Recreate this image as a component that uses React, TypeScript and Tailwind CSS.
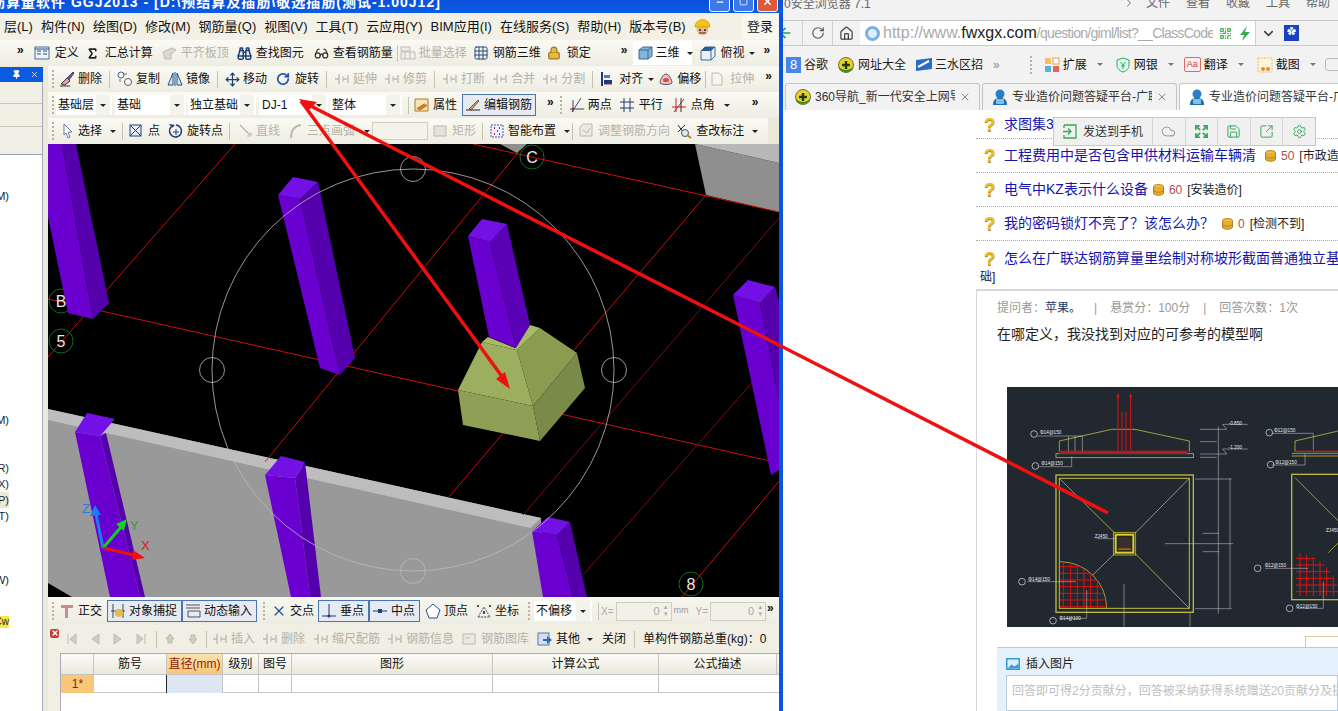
import React from 'react'
import {
  ArrowLeft, Binoculars, ChevronDown, ChevronRight, Cloud, Expand, Glasses, Grid3x3, House, Lock,
  Minus, Move, Pin, QrCode, RotateCw, Save, Settings, Sigma, Square, SquareArrowOutUpRight, X
} from 'lucide-react'

const FONT = "[font-family:'Liberation_Sans','Noto_Sans_CJK_SC',sans-serif]"

// small 16x16 drawing wrapper for the toolbar glyphs lucide has no match for
const G = ({ children, w = 16, className = '' }: { children: React.ReactNode; w?: number; className?: string }) => (
  <svg width={w} height={16} viewBox={`0 0 ${w} 16`} fill="none" className={`shrink-0 ${className}`}>
    {children}
  </svg>
)

const Caret = ({ className = '' }: { className?: string }) => (
  <span className={`inline-block h-0 w-0 border-x-[3px] border-t-[3px] border-x-transparent border-t-[#222] ${className}`} />
)

const More = ({ className = '' }: { className?: string }) => (
  <span className={`text-[12px] leading-none font-bold text-[#111] ${className}`}>»</span>
)

const Grip = ({ className = '' }: { className?: string }) => (
  <span className={`h-[18px] w-[2px] shrink-0 border-l-2 border-dotted border-[#b5b3a4] ${className}`} />
)

const Sep = ({ className = '' }: { className?: string }) => <span className={`h-[17px] w-px shrink-0 bg-[#c5c2b0] ${className}`} />

interface ToolProps {
  icon?: React.ReactNode
  label: string
  dim?: boolean
  caret?: boolean
  on?: boolean
  className?: string
}

const Tool = ({ icon, label, dim, caret, on, className = '' }: ToolProps) => (
  <span
    className={`flex h-[22px] shrink-0 items-center gap-[3px] whitespace-nowrap text-[12px] ${dim ? 'text-[#b4b2a8]' : 'text-[#111]'} ${
      on ? 'border border-[#4a76b0] bg-[#e6eaf2] px-[2px]' : ''
    } ${className}`}
  >
    {icon}
    {label}
    {caret && <Caret className="ml-[4px]" />}
  </span>
)

const Combo = ({ label, className = '' }: { label: string; className?: string }) => (
  <span className={`flex h-[20px] shrink-0 items-center justify-between whitespace-nowrap bg-white pl-[2px] pr-[2px] text-[12px] text-[#111] ${className}`}>
    {label}
    <span className="flex h-full w-[14px] items-center justify-center bg-[#f4f3ea]">
      <Caret />
    </span>
  </span>
)

const Bar = ({ children, className = '' }: { children: React.ReactNode; className?: string }) => (
  <div className={`flex h-[26px] shrink-0 items-center bg-[linear-gradient(#faf9f3,#eeede2)] ${className}`}>{children}</div>
)

const WinBtn = ({ children, className = '' }: { children: React.ReactNode; className?: string }) => (
  <span className={`flex h-[20px] w-[21px] items-center justify-center rounded-[3px] border border-white text-white ${className}`}>{children}</span>
)

const gray = '#bdbbb0'
const Stub = ({ c = gray }: { c?: string }) => (
  <G>
    <path d="M1 8h4M9 8h4M5 3v10M14 4v8" stroke={c} strokeWidth="1.4" />
    <path d="M9 5v6" stroke={c} />
  </G>
)

const Menu = () => (
  <div className="flex h-[27px] shrink-0 items-center gap-[8px] bg-[#f3f1e5] pl-[4px] text-[13px] text-[#111]">
    {['层(L)', '构件(N)', '绘图(D)', '修改(M)', '钢筋量(Q)', '视图(V)', '工具(T)', '云应用(Y)', 'BIM应用(I)', '在线服务(S)', '帮助(H)', '版本号(B)'].map((m) => (
      <span key={m} className="whitespace-nowrap">
        {m}
      </span>
    ))}
    <svg width="17" height="18" viewBox="0 0 17 18" className="shrink-0">
      <circle cx="8.5" cy="11" r="6" fill="#e9b98f" />
      <path d="M1 9a7.5 7.5 0 0 1 15 0z" fill="#f2c413" stroke="#b88a00" strokeWidth=".6" />
      <circle cx="6" cy="12" r="1" fill="#222" />
      <circle cx="11" cy="12" r="1" fill="#222" />
      <path d="M5 15h7" stroke="#522" />
    </svg>
    <span className="ml-auto mr-[1px] flex h-[24px] w-[36px] items-center justify-center whitespace-nowrap bg-[#f8f7f0]">登录</span>
  </div>
)

const TopBar = () => (
  <Bar className="gap-[8px] pl-[17px]">
    <More className="mr-[2px] -mt-[6px]" />
    <Tool
      label="定义"
      icon={
        <G>
          <rect x="1" y="2" width="14" height="12" fill="#eef3fa" stroke="#4d6d96" />
          <path d="M3 6h4M3 9h4M9 6h4M9 9h4M1 4h14" stroke="#2d4d78" />
        </G>
      }
      className="gap-[5px]"
    />
    <Tool icon={<Sigma size={13} strokeWidth={3} className="text-[#222]" />} label="汇总计算" className="-ml-[1px] gap-[6px]" />
    <Tool
      dim
      label="平齐板顶"
      icon={
        <G>
          <path d="M1 7l9-4 4 2-5 4v5H3z" fill="#dcdad0" stroke={gray} />
        </G>
      }
      className="ml-[1px]"
    />
    <Tool icon={<Binoculars size={15} strokeWidth={2.4} className="text-[#1b3f7a]" />} label="查找图元" className="gap-[4px]" />
    <Tool icon={<Glasses size={15} strokeWidth={2} className="text-[#333]" />} label="查看钢筋量" className="ml-[2px] gap-[4px]" />
    <Sep className="-ml-[4px] -mr-[6px]" />
    <Tool
      dim
      label="批量选择"
      icon={
        <G>
          <path d="M1 2h9v4H1zM1 7h14v7H1zM5 7v7M10 7v7" stroke={gray} fill="#eee" />
        </G>
      }
    />
    <Tool icon={<Grid3x3 size={16} strokeWidth={1.4} className="text-[#1f3f78]" />} label="钢筋三维" className="-ml-[2px] gap-[4px]" />
    <Tool icon={<Lock size={14} strokeWidth={2} fill="#e7b93c" className="text-[#9a7a25]" />} label="锁定" className="-ml-[2px] gap-[6px]" />
    <More className="ml-[22px] -mt-[6px]" />
    <span className="-ml-[3px] flex h-[24px] w-[59px] items-center gap-[2px] whitespace-nowrap bg-white pl-[5px]">
      <G>
        <path d="M1 5l4-3h9v9l-4 3H1z" fill="#82b4dc" stroke="#3b6a96" />
        <path d="M1 5h9v9M10 5l4-3" stroke="#3b6a96" />
      </G>
      <span className="text-[12px] text-[#111]">三维</span>
      <Caret className="ml-[5px]" />
    </span>
    <Tool
      icon={
        <G>
          <path d="M1 6l4-4h10v9l-4 4H1z" fill="#e9f1f8" stroke="#3b6a96" />
          <path d="M5 2h10l-4 4H1z" fill="#2f5f92" />
          <path d="M11 6v9" stroke="#3b6a96" />
        </G>
      }
      label="俯视"
      caret
      className="gap-[5px] [&>span]:-ml-[1px]"
    />
    <More className="ml-[1px] -mt-[6px]" />
  </Bar>
)

const EditBar = () => (
  <Bar className="gap-[7px] pl-[4px]">
    <Grip className="-mr-[2px]" />
    <Tool
      icon={
        <G>
          <path d="M2 13l6-6 3 3-5 4z" fill="#caa" stroke="#533" />
          <path d="M8 7l6-6 1 1-5 7" fill="#665fa8" stroke="#445" />
          <path d="M1 15h10" stroke="#333" />
        </G>
      }
      label="删除"
    />
    <Sep />
    <Tool
      icon={
        <G>
          <circle cx="4" cy="4" r="3" stroke="#3a5f8a" fill="#fff" />
          <circle cx="11" cy="11" r="3.5" stroke="#555" fill="#fff" />
          <path d="M7 3h3M3 8v3" stroke="#777" />
        </G>
      }
      label="复制"
    />
    <Tool
      icon={
        <G>
          <path d="M6 2v12H1zM10 2v12h5z" stroke="#1f4f80" fill="#dfe9f3" />
          <path d="M8 1v14" stroke="#1f4f80" />
        </G>
      }
      label="镜像"
    />
    <Sep />
    <Tool icon={<Move size={15} strokeWidth={2} className="text-[#1e3f72]" />} label="移动" />
    <Tool icon={<RotateCw size={14} strokeWidth={3} className="text-[#1f55b0]" />} label="旋转" className="ml-[2px] gap-[5px]" />
    <Sep />
    <Tool dim icon={<Stub />} label="延伸" />
    <Tool dim icon={<Stub />} label="修剪" />
    <Sep />
    <Tool dim icon={<Stub />} label="打断" />
    <Tool dim icon={<Stub />} label="合并" />
    <Tool dim icon={<Stub />} label="分割" />
    <Sep />
    <Tool
      icon={
        <G w={13}>
          <path d="M2 1v14" stroke="#1d3a78" strokeWidth="2" />
          <path d="M4 4h6v3H4z" fill="#4c7ac0" />
          <path d="M4 9h8v4H4z" fill="#1d3a78" />
          <path d="M4 13h8" stroke="#b02040" />
        </G>
      }
      label="对齐"
      caret
      className="gap-[6px] [&>span]:-ml-[1px]"
    />
    <Tool
      icon={
        <G>
          <path d="M2 12c0-3 3-9 6-9s6 6 6 9c-1 2-11 2-12 0z" fill="#eec0b8" stroke="#557" />
          <ellipse cx="8" cy="9" rx="3" ry="2" fill="#d84a4a" />
        </G>
      }
      label="偏移"
      className="-ml-[3px] gap-[1px]"
    />
    <Sep className="-mx-[3px]" />
    <Tool
      dim
      icon={
        <G w={14}>
          <path d="M2 2h7l3 3v9H2z" fill="#f5f4ee" stroke={gray} />
        </G>
      }
      label="拉伸"
      className="gap-[6px]"
    />
    <More className="ml-[4px] -mt-[6px]" />
  </Bar>
)

const PropBar = () => (
  <Bar className="pl-[4px]">
    <Grip className="mr-[2px]" />
    <Combo label="基础层" className="w-[56px]" />
    <Combo label="基础" className="ml-[3px] w-[71px]" />
    <Combo label="独立基础" className="ml-[2px] w-[68px]" />
    <Combo label="DJ-1" className="ml-[3px] w-[69px] pl-[3px]" />
    <Combo label="整体" className="ml-[2px] w-[72px] pl-[2px]" />
    <Sep className="ml-[6px]" />
    <Tool
      icon={
        <G>
          <path d="M1 2h13v12H1z" fill="#f6e7b8" stroke="#a67b2a" />
          <path d="M3 12l8-5M5 13l8-5" stroke="#d17a1a" strokeWidth="2" />
        </G>
      }
      label="属性"
      className="ml-[5px]"
    />
    <Tool
      on
      icon={
        <G>
          <path d="M1 13h14" stroke="#222" />
          <path d="M4 12L13 3l1 1-8 9z" fill="#d2a64c" stroke="#333" strokeWidth=".7" />
        </G>
      }
      label="编辑钢筋"
      className="ml-[5px] w-[74px]"
    />
    <More className="ml-[11px] -mt-[6px]" />
    <Grip className="ml-[6px]" />
    <Tool
      icon={
        <G>
          <path d="M1 12h14M4 3v12M12 1L3 15" stroke="#3c4a55" />
          <circle cx="4" cy="12" r="1.2" fill="#a23" />
        </G>
      }
      label="两点"
      className="ml-[7px]"
    />
    <Tool
      icon={
        <G w={14}>
          <path d="M4 1v14M10 1v14M0 5h14M0 11h14" stroke="#1f3a78" />
        </G>
      }
      label="平行"
      className="ml-[8px] gap-[5px]"
    />
    <Tool
      icon={
        <G w={14}>
          <path d="M4 1v14M0 10h14M12 2L2 15" stroke="#c02030" />
          <path d="M9 1v14" stroke="#333" />
        </G>
      }
      label="点角"
      caret
      className="ml-[9px] gap-[5px]"
    />
    <More className="ml-[22px] -mt-[6px]" />
  </Bar>
)

const DrawBar = () => (
  <Bar className="gap-[6px] pl-[4px]">
    <Grip className="mr-[2px]" />
    <Tool
      icon={
        <G w={12}>
          <path d="M2 1l8 8-4 .4L8 14l-2 1-2-5-2 2z" fill="#fff" stroke="#6a7a95" />
        </G>
      }
      label="选择"
      caret
      className="gap-[4px]"
    />
    <Sep />
    <Tool
      icon={
        <G w={13}>
          <rect x="1" y="2" width="11" height="11" fill="#e8eef8" stroke="#243f80" />
          <path d="M1 2l11 11M12 2L1 13" stroke="#243f80" />
        </G>
      }
      label="点"
      className="gap-[6px]"
    />
    <Tool
      icon={
        <G>
          <path d="M3 4a6 6 0 1 0 5-2" stroke="#1d3f78" strokeWidth="1.5" />
          <path d="M1 1l3 4 3-3z" fill="#1d3f78" />
          <path d="M8 6v6M5 9h6" stroke="#1d3f78" />
        </G>
      }
      label="旋转点"
      className="ml-[2px]"
    />
    <Sep />
    <Tool
      dim
      icon={
        <G w={14}>
          <path d="M2 2l10 10" stroke={gray} strokeWidth="1.5" />
          <path d="M9 13l4 0 0-4" stroke={gray} />
        </G>
      }
      label="直线"
      className="ml-[2px] gap-[4px]"
    />
    <Tool
      dim
      icon={
        <G w={14}>
          <path d="M3 15C3 8 6 3 13 2" stroke={gray} strokeWidth="2" />
        </G>
      }
      label="三点画弧"
      caret
      className="ml-[2px] gap-[5px]"
    />
    <span className="-ml-[4px] h-[18px] w-[56px] shrink-0 border border-[#d0cebf] bg-[#f4f3ea]" />
    <Tool
      dim
      icon={
        <G w={14}>
          <rect x="1" y="3" width="12" height="10" fill="#e5e3d8" stroke={gray} />
        </G>
      }
      label="矩形"
      className="-ml-[1px] gap-[5px]"
    />
    <Sep />
    <Tool
      icon={
        <G w={14}>
          <rect x="1" y="2" width="12" height="12" fill="#eef" stroke="#4060a0" strokeDasharray="2 1" />
          <path d="M4 5h1M9 5h1M7 8h1M4 11h1M9 11h1" stroke="#c02030" strokeWidth="2" />
        </G>
      }
      label="智能布置"
      caret
      className="ml-[1px] gap-[4px]"
    />
    <Sep className="-ml-[4px]" />
    <Tool
      dim
      icon={
        <G w={14}>
          <path d="M4 1h9v12H1V4z" fill="#eceae0" stroke={gray} />
          <path d="M4 7l4 3 3-5" stroke={gray} />
        </G>
      }
      label="调整钢筋方向"
      className="gap-[5px]"
    />
    <Tool
      icon={
        <G>
          <path d="M2 2l5 7M9 2L2 9" stroke="#234" />
          <circle cx="9" cy="10" r="3.5" fill="#dbe8f5" stroke="#555" />
          <path d="M11 12l4 3" stroke="#b08030" strokeWidth="2" />
        </G>
      }
      label="查改标注"
      caret
      className="gap-[4px]"
    />
    <span className="ml-[4px] h-full flex-1 bg-[#ece9d8]" />
  </Bar>
)

const Viewport = () => {
  const thin: [number, number, number, number, string][] = [
    [48, 299, 770, 461, '#e01010'],
    [473, 144, 779, 212, '#e01010'],
    [48, 357, 235, 144, '#e01010'],
    [265, 462, 520, 150, '#e01010'],
    [706, 195, 448, 498, '#e01010'],
    [779, 218, 523, 515, '#8a1010'],
    [779, 352, 583, 575, '#8a1010'],
    [780, 480, 682, 597, '#e01010']
  ]
  const labels: [number, number, string][] = [
    [61, 301, 'B'],
    [61, 341, '5'],
    [532, 157, 'C'],
    [691, 584, '8']
  ]
  const ring = [
    [413, 169],
    [212, 370],
    [614, 370],
    [413, 571]
  ]
  // left face, right face, cap
  const cols = [
    ['48,144 62,144 93,319 68,313 48,217', '62,144 76,144 109,303 93,319', ''],
    ['278,195 300,199 340,375 320,368', '300,199 318,182 355,358 340,375', '278,195 293,177 318,182 300,199'],
    ['733,295 760,303 779,400 779,470 771,475', '760,303 775,287 779,300 779,400', '733,295 748,280 775,287 760,303'],
    ['75,432 100,436 140,597 110,597', '100,436 106,433 145,597 140,597', '75,432 87,413 115,419 100,436'],
    ['265,475 295,478 310,597 291,597', '295,478 305,462 321,597 310,597', '265,475 281,456 305,462 295,478'],
    ['532,531 557,535 573,597 543,597', '557,535 570,522 587,597 573,597', '532,531 548,517 570,522 557,535']
  ]
  return (
    <svg viewBox="48 144 731 453" className="block h-[453px] w-[731px] shrink-0 bg-black">
      <polygon points="695,144 779,163 779,212 706,195" fill="#8f8f8f" />
      <polygon points="695,144 779,144 779,163" fill="#b8b8b8" />
      <polygon points="500,144 527,144 517,153" fill="#8f8f8f" />
      <polygon points="48,409 541,518 545,597 48,597" fill="#999" />
      <polygon points="48,409 541,518 530,528 48,420" fill="#bdbdbd" />
      <polygon points="48,583 72,597 48,597" fill="#000" />
      {thin.map((l, i) => (
        <line key={i} x1={l[0]} y1={l[1]} x2={l[2]} y2={l[3]} stroke={l[4]} strokeWidth="0.9" />
      ))}
      {labels.map(([x, y, t]) => (
        <g key={t}>
          <circle cx={x} cy={y} r="12" fill="none" stroke="#0d7a24" strokeWidth="0.9" />
          <text x={x} y={y + 6} textAnchor="middle" fill="#e8e8e8" fontSize="16" fontFamily="Liberation Sans">
            {t}
          </text>
        </g>
      ))}
      {cols.map((c, i) => (
        <g key={i}>
          <polygon points={c[0]} fill="#6a00cf" />
          <polygon points={c[1]} fill="#5500ad" />
          {c[2] && <polygon points={c[2]} fill="#7210e6" />}
        </g>
      ))}
      <circle cx="413" cy="370" r="201" fill="none" stroke="#bbb" strokeWidth="0.8" />
      {ring.map((r, i) => (
        <circle key={i} cx={r[0]} cy={r[1]} r="12.5" fill="none" stroke="#bbb" strokeWidth="0.8" />
      ))}
      {/* footing */}
      <polygon points="458,390 482,342 517,350 533,406" fill="#9cae5f" />
      <polygon points="517,350 540,328 577,353 533,406" fill="#8b9b50" />
      <polygon points="458,390 533,406 540,441 463,425" fill="#8f9f55" />
      <polygon points="533,406 577,353 585,388 540,441" fill="#7a8a48" />
      <polygon points="482,342 488,337 515,348 530,325 540,328 517,350" fill="#a6ba68" />
      <polygon points="468,236 490,242 516,348 489,337" fill="#6a00cf" />
      <polygon points="490,242 507,224 530,325 516,348" fill="#5a00b5" />
      <polygon points="468,236 482,219 507,224 490,242" fill="#7210e6" />
      {/* axes */}
      <g strokeWidth="3">
        <line x1="103" y1="548" x2="96" y2="514" stroke="#1a7df0" />
        <polygon points="95,505 90,516 101,515" fill="#1a7df0" />
        <line x1="103" y1="548" x2="122" y2="526" stroke="#12d020" />
        <polygon points="127,519 116,524 124,531" fill="#12d020" />
        <line x1="103" y1="548" x2="134" y2="555" stroke="#f01010" />
        <polygon points="145,558 133,550 132,560" fill="#f01010" />
      </g>
      <g fontSize="13" fontFamily="Liberation Sans">
        <text x="82" y="513" fill="#2a80e0">Z</text>
        <text x="130" y="530" fill="#30a040">Y</text>
        <text x="141" y="550" fill="#d02020">X</text>
      </g>
    </svg>
  )
}

const SnapBar = () => (
  <div className="flex h-[28px] shrink-0 items-center bg-[linear-gradient(#f7f6ef,#eeede2)] pl-[4px]">
    <Grip className="mr-[5px]" />
    <Tool
      icon={
        <G>
          <path d="M2 2h12v3H9v10H6V5H2z" fill="#c88e8a" />
        </G>
      }
      label="正交"
    />
    <Tool
      on
      icon={
        <G>
          <path d="M3 1v14M13 1v14M1 8h14" stroke="#444" />
          <circle cx="9" cy="10" r="4" fill="#e2bc4c" />
        </G>
      }
      label="对象捕捉"
      className="ml-[5px] w-[75px]"
    />
    <Tool
      on
      icon={
        <G>
          <path d="M1 2h14M1 5h14M3 8h12v6H3z" stroke="#555" />
        </G>
      }
      label="动态输入"
      className="w-[75px]"
    />
    <Grip className="ml-[6px]" />
    <Tool icon={<X size={16} strokeWidth={1.8} className="text-[#1f4f9a]" />} label="交点" className="ml-[6px]" />
    <Tool
      on
      icon={
        <G>
          <path d="M1 13h14M8 1v12" stroke="#1f3f78" />
          <circle cx="8" cy="13" r="1.6" fill="#1f3f78" />
        </G>
      }
      label="垂点"
      className="ml-[4px] w-[51px]"
    />
    <Tool
      on
      icon={
        <G>
          <path d="M1 8h14" stroke="#1f3f78" />
          <rect x="6" y="6" width="4" height="4" fill="#1f3f78" />
        </G>
      }
      label="中点"
      className="w-[51px]"
    />
    <Tool
      icon={
        <G>
          <path d="M8 1l7 6-3 8H4L1 7z" fill="#fff" stroke="#1f4f9a" />
        </G>
      }
      label="顶点"
      className="ml-[5px]"
    />
    <Tool
      icon={
        <G>
          <path d="M2 14L8 4l6 10z" stroke="#447" strokeDasharray="2 1" />
          <path d="M2 2v2M14 2v2M8 8v3" stroke="#264" strokeWidth="2" />
        </G>
      }
      label="坐标"
      className="ml-[8px]"
    />
    <Grip className="ml-[9px]" />
    <Combo label="不偏移" className="ml-[4px] w-[58px]" />
    <Sep className="ml-[6px]" />
    <span className="ml-[2px] text-[10px] text-[#aaa]">X=</span>
    <span className="ml-[2px] flex h-[19px] w-[56px] items-center justify-end gap-[3px] border border-[#cfcdbe] bg-[#f2f1e8] pr-[2px] text-[11px] text-[#aaa]">
      0
      <span className="flex flex-col text-[6px] leading-[7px]">
        <span>▲</span>
        <span>▼</span>
      </span>
    </span>
    <span className="ml-[2px] text-[9px] text-[#999]">mm</span>
    <span className="ml-[7px] text-[10px] text-[#aaa]">Y=</span>
    <span className="ml-[2px] flex h-[19px] w-[56px] items-center justify-end gap-[3px] border border-[#cfcdbe] bg-[#f2f1e8] pr-[2px] text-[11px] text-[#aaa]">
      0
      <span className="flex flex-col text-[6px] leading-[7px]">
        <span>▲</span>
        <span>▼</span>
      </span>
    </span>
    <More className="ml-[1px] -mt-[6px]" />
  </div>
)

const Nav = ({ d }: { d: string }) => (
  <G w={10}>
    <path d={d} fill="#cfcdc4" stroke="#bdbbb0" />
  </G>
)

const RebarPanel = () => {
  const cols = ['', '筋号', '直径(mm)', '级别', '图号', '图形', '计算公式', '公式描述']
  return (
    <div className="flex h-[86px] shrink-0 flex-col bg-[#f1efe4]">
      <div className="flex h-[28px] shrink-0 items-center pl-[2px]">
        <span className="-mt-[12px] flex h-[9px] w-[9px] items-center justify-center rounded-[2px] bg-[#c83a3a] text-white">
          <X size={8} strokeWidth={4} />
        </span>
        <span className="ml-[8px] flex items-center gap-[13px]">
          <Nav d="M1 3v10M9 3v10L3 8z" />
          <Nav d="M9 3v10L2 8z" />
          <Nav d="M1 3v10l7-5z" />
          <Nav d="M9 3v10M1 3v10l6-5z" />
        </span>
        <Sep className="ml-[10px]" />
        <span className="ml-[8px] flex items-center gap-[13px]">
          <Nav d="M5 3l4 5H7v4H3V8H1z" />
          <Nav d="M5 13l4-5H7V4H3v4H1z" />
        </span>
        <Sep className="ml-[8px]" />
        <Tool dim icon={<Stub />} label="插入" className="ml-[5px]" />
        <Tool dim icon={<Stub />} label="删除" className="ml-[7px]" />
        <Tool dim icon={<Stub />} label="缩尺配筋" className="ml-[8px]" />
        <Tool dim icon={<Stub />} label="钢筋信息" className="ml-[7px]" />
        <Tool
          dim
          icon={
            <G w={14}>
              <rect x="1" y="3" width="12" height="10" stroke={gray} fill="#eceae0" />
              <path d="M3 7h5" stroke={gray} />
            </G>
          }
          label="钢筋图库"
          className="ml-[8px] gap-[5px]"
        />
        <Tool
          icon={
            <G>
              <rect x="1" y="2" width="11" height="12" fill="#cfe0f4" stroke="#5a78a0" />
              <path d="M6 8h4V5l5 4-5 4v-3H6z" fill="#2a6ac0" />
            </G>
          }
          label="其他"
          caret
          className="ml-[8px]"
        />
        <span className="ml-[9px] text-[12px] text-[#111]">关闭</span>
        <Sep className="ml-[8px]" />
        <span className="ml-[8px] whitespace-nowrap text-[12px] text-[#111]">单构件钢筋总重(kg)：0</span>
      </div>
      <div className="ml-[12px] flex flex-1 flex-col border-l border-t border-[#aab] bg-white">
        <div className="grid h-[20px] grid-cols-[33px_73px_56px_36px_33px_201px_166px_118px] bg-[linear-gradient(#fbfaf6,#ebe9dd)] text-[12px] text-[#111]">
          {cols.map((c, i) => (
            <span
              key={i}
              className={`flex items-center justify-center border-r border-[#c8c6ba] ${i === 2 ? 'bg-[linear-gradient(#fbe2b0,#f8c778)] text-[#8a1c10]' : ''}`}
            >
              {c}
            </span>
          ))}
        </div>
        <div className="grid h-[19px] grid-cols-[33px_73px_56px_36px_33px_201px_166px_118px] border-y border-[#c4c4c4] text-[12px]">
          <span className="flex items-center justify-center bg-[#f8c778] text-[#7a2a10]">1*</span>
          <span className="border-r border-[#222]" />
          <span className="border-r border-[#c4c4c4] bg-[#dde6f3]" />
          <span className="border-r border-[#c4c4c4]" />
          <span className="border-r border-[#c4c4c4]" />
          <span className="border-r border-[#c4c4c4]" />
          <span className="border-r border-[#c4c4c4]" />
          <span />
        </div>
      </div>
    </div>
  )
}

const SideStrip = () => (
  <div className="flex w-[48px] shrink-0 flex-col bg-[#ece9d8]">
    <div className="mt-[1px] flex h-[15px] w-[43px] shrink-0 items-center justify-end gap-[9px] bg-[#0a5be0] pr-[4px] text-white">
      <Pin size={9} strokeWidth={3} fill="#fff" />
      <X size={9} strokeWidth={2} />
    </div>
    <div className="relative flex w-[43px] flex-1 flex-col overflow-hidden border-r border-[#a3abc0] bg-white">
      <div className="h-[22px] shrink-0 border-b border-[#c9c7b8] bg-[#f1efe4]" />
      <div className="h-[23px] shrink-0 border-b border-[#c9c7b8] bg-[#f1efe4]" />
      <div className="h-[28px] shrink-0 border-b border-[#9aa3b5] bg-[#f1efe4]" />
      <div className="flex flex-1 flex-col items-end pr-[33px] text-[11px] leading-[16px] text-[#222]">
        <span className="mt-[33px]">M)</span>
        <span className="mt-[208px]">M)</span>
        <span className="mt-[32px]">R)</span>
        <span>X)</span>
        <span className="bg-[#ece9d8] pl-[6px]">P)</span>
        <span>T)</span>
        <span className="mt-[48px]">W)</span>
        <span className="mt-[28px] bg-[#f6e84a] text-[10px] leading-[12px]">Cw</span>
      </div>
    </div>
  </div>
)

const AppWindow = () => (
  <div className="flex h-[711px] w-[783px] shrink-0 flex-col overflow-hidden">
    <div className="flex h-[13px] shrink-0 items-center justify-between overflow-hidden bg-[linear-gradient(#0a50d8,#0a5ce8)] pr-[5px]">
      <span className="-mt-[8px] -ml-[9px] whitespace-nowrap text-[14px] font-bold tracking-[1px] text-white">
        筋算量软件 GGJ2013 - [D:\预结算及插筋\敬选插筋(测试-1.00J12]
      </span>
      <span className="-mt-[10px] flex gap-[3px]">
        <WinBtn className="bg-[#3c78e8]">
          <Minus size={10} strokeWidth={3} />
        </WinBtn>
        <WinBtn className="bg-[#3c78e8]">
          <Square size={9} strokeWidth={2} />
        </WinBtn>
        <WinBtn className="bg-[#e0583a]">
          <X size={11} strokeWidth={3} />
        </WinBtn>
      </span>
    </div>
    <div className="flex flex-1 flex-col overflow-hidden border-r-[4px] border-[#0a55e0]">
      <Menu />
      <TopBar />
      <div className="flex flex-1 overflow-hidden">
        <SideStrip />
        <div className="flex w-[731px] shrink-0 flex-col">
          <EditBar />
          <PropBar />
          <DrawBar />
          <Viewport />
          <SnapBar />
          <RebarPanel />
        </div>
      </div>
    </div>
  </div>
)

const Ball = () => (
  <svg width="16" height="16" viewBox="0 0 16 16" className="shrink-0">
    <circle cx="8" cy="8" r="7.5" fill="#e8cf2c" stroke="#6a7a20" />
    <path d="M1 10c4 4 10 4 14 0v2c-3 4-11 4-14 0z" fill="#3a8a2a" />
    <path d="M8 4v8M4 8h8" stroke="#1d3a10" strokeWidth="2.4" />
  </svg>
)

const Person = () => (
  <svg width="16" height="17" viewBox="0 0 16 17" className="shrink-0">
    <circle cx="8" cy="5" r="4.5" fill="#2a7fc8" />
    <path d="M1 16c0-6 3-7 7-7s7 1 7 7z" fill="#1f6db0" />
    <rect x="4" y="10" width="8" height="5" rx="1" fill="#7cc4ea" />
  </svg>
)

const Tab = ({ icon, label, active, close }: { icon: React.ReactNode; label: string; active?: boolean; close?: boolean }) => (
  <span
    className={`flex h-[27px] shrink-0 items-center gap-[4px] rounded-t-[3px] border border-b-0 border-[#c4c4c4] pl-[9px] pr-[8px] text-[12px] text-[#333] ${
      active ? 'w-[170px] bg-white' : 'w-[195px] bg-[#f2f2f2]'
    }`}
  >
    {icon}
    <span className="min-w-0 flex-1 overflow-hidden whitespace-nowrap">{label}</span>
    {close && <X size={12} className="shrink-0 text-[#888]" />}
  </span>
)

const Ask = () => (
  <span className="w-[23px] shrink-0 pl-[3px] text-[19px] leading-none font-bold text-[#e8c020] [text-shadow:0_1px_0_#a88a10]">?</span>
)

const Coin = () => (
  <svg width="11" height="12" viewBox="0 0 11 12" className="shrink-0">
    <ellipse cx="5.5" cy="3" rx="5" ry="2.4" fill="#f0c040" stroke="#b08420" />
    <path d="M.5 3v6c0 3 10 3 10 0V3" fill="#e6ae2a" stroke="#b08420" />
    <path d="M.5 6c0 3 10 3 10 0" fill="none" stroke="#b08420" />
  </svg>
)

const Question = ({ title, coins, tag, className = '' }: { title: string; coins?: string; tag?: string; className?: string }) => (
  <div className={`flex items-center whitespace-nowrap border-b border-dotted border-[#aaa] pl-[5px] ${className}`}>
    <Ask />
    <span className="text-[14px] text-[#1414b0]">{title}</span>
    {coins && (
      <>
        <Coin />
        <span className="ml-[5px] text-[12px] text-[#a85050]">{coins}</span>
        <span className="ml-[5px] text-[12px] text-[#222]">{tag}</span>
      </>
    )}
  </div>
)

const CadDrawing = () => {
  const yellow = '#bcbc3c'
  const grid = [190, 212, 232, 252, 272, 292]
  const gridY = [560, 580, 600, 620, 640, 660, 680]
  return (
    <svg viewBox="21 21 993 720" className="block h-[240px] w-[331px] shrink-0 bg-[#222830]">
      <defs>
        <clipPath id="quarter">
          <path d="M180 545a140 140 0 0 1 140 140H180z" />
        </clipPath>
        <clipPath id="quarter2">
          <path d="M888 518a140 140 0 0 1 130 130H888z" />
        </clipPath>
      </defs>
      <g fill="none" stroke={yellow} strokeWidth="2.4">
        <path d="M178 215v-32l157-35h70l163 35v32" />
        <rect x="168" y="221" width="412" height="12" />
        <rect x="168" y="285" width="412" height="412" strokeWidth="4" />
        <rect x="178" y="295" width="390" height="390" strokeWidth="3" />
        <path d="M178 295l167 165M568 295L405 460M278 585l67-65M568 685L405 520" />
        <rect x="340" y="457" width="67" height="68" />
        <rect x="347" y="464" width="53" height="54" strokeWidth="6" stroke="#e0d020" />
        <path d="M180 545a140 140 0 0 1 140 140" />
        <path d="M885 215v-32l130-30M875 228h140M875 220h140" />
        <rect x="875" y="283" width="160" height="376" strokeWidth="4" />
        <path d="M885 293l130 130M985 518l30-30" />
      </g>
      <rect x="178" y="212" width="384" height="10" fill="#a82020" />
      <rect x="355" y="472" width="37" height="38" fill="#3a3030" />
      <rect x="355" y="505" width="37" height="5" fill="#b06010" />
      <rect x="888" y="212" width="127" height="4" fill="#d01818" />
      <g stroke="#e01010" strokeWidth="3">
        <path d="M354 45v165M392 45v165M366 95v115M378 95v115" />
      </g>
      <path d="M354 38l-5 14h10zM392 38l-5 14h10z" fill="#e01010" />
      <g clipPath="url(#quarter)" stroke="#e01010" strokeWidth="3">
        {grid.map((x) => (
          <path key={x} d={`M${x} 540V690`} />
        ))}
        {gridY.map((y) => (
          <path key={y} d={`M175 ${y}H325`} />
        ))}
      </g>
      <g clipPath="url(#quarter2)" stroke="#e01010" strokeWidth="3">
        {[900, 920, 940, 960, 980, 1000].map((x) => (
          <path key={x} d={`M${x} 515V660`} />
        ))}
        {[535, 555, 575, 595, 615, 635].map((y) => (
          <path key={y} d={`M885 ${y}H1018`} />
        ))}
      </g>
      <g fill="none" stroke="#c8c8c8" strokeWidth="1.6">
        <path d="M112 168h135v45M205 168v45M225 168v45M118 260h97v-30" />
        <path d="M600 148h80l-12 -15h75M600 222h80l-12 -15h75M600 185h50M600 232h50" />
        <path d="M655 140v560M690 295v390M585 297h110M585 686h110M608 460h50M608 515h50M495 491h205" />
        <path d="M82 605h145M290 476h55M372 612v128M180 715h80v-85M795 565h130M815 255h100v-35M815 160h125v50M890 685h80v-80M570 700v40" />
      </g>
      <g fill="none" stroke="#e8e8e8" strokeWidth="2">
        <circle cx="102" cy="162" r="10" />
        <circle cx="106" cy="258" r="10" />
        <circle cx="66" cy="605" r="10" />
        <circle cx="159" cy="722" r="10" />
        <circle cx="808" cy="158" r="10" />
        <circle cx="812" cy="254" r="10" />
        <circle cx="773" cy="565" r="10" />
        <circle cx="869" cy="685" r="10" />
      </g>
      <g fill="#e8e8e8" fontSize="14" fontFamily="Liberation Sans">
        <text x="120" y="161">Φ14@150</text>
        <text x="124" y="255">Φ14@150</text>
        <text x="85" y="604">Φ14@150</text>
        <text x="178" y="720">Φ14@100</text>
        <text x="284" y="474">ZJ450</text>
        <text x="686" y="136">-0.850</text>
        <text x="686" y="208">-1.200</text>
        <text x="822" y="155">Φ12@150</text>
        <text x="826" y="252">Φ12@150</text>
        <text x="794" y="561">Φ12@150</text>
        <text x="888" y="683">Φ12@150</text>
        <text x="978" y="456">ZJ450</text>
      </g>
    </svg>
  )
}

const Browser = () => (
  <div className="flex h-[711px] w-[555px] shrink-0 flex-col overflow-hidden bg-white">
    <div className="flex h-[20px] shrink-0 items-start justify-between overflow-hidden bg-[#f2f2f2] text-[12px] leading-[12px] text-[#666]">
      <span className="-mt-[2px] ml-[1px]">0安全浏览器 7.1</span>
      <span className="-mt-[3px] flex gap-[16px] whitespace-nowrap pr-[8px]">
        <ChevronRight size={12} className="-mr-[5px]" />
        <span>文件</span>
        <span>查看</span>
        <span>收藏</span>
        <span>工具</span>
        <span>帮助</span>
      </span>
    </div>
    <div className="flex h-[26px] shrink-0 items-center border-y border-[#c8c8c8] bg-[#f2f2f2]">
      <span className="flex h-full w-[20px] items-center overflow-hidden border-r border-[#d0d0d0]">
        <ArrowLeft size={16} strokeWidth={2.5} className="-ml-[6px] shrink-0 text-[#1fa34a]" />
      </span>
      <span className="flex h-full w-[30px] items-center justify-center border-r border-[#d0d0d0]">
        <RotateCw size={14} strokeWidth={2} className="text-[#555]" />
      </span>
      <span className="flex h-full w-[27px] items-center justify-center">
        <House size={15} strokeWidth={2} className="text-[#444]" />
      </span>
      <span className="flex h-full w-[395px] items-center gap-[3px] overflow-hidden bg-white pl-[5px] pr-[4px]">
        <span className="h-[15px] w-[15px] shrink-0 rounded-full border-[3px] border-[#7ab0e0] bg-[#dfeefa]" />
        <span className="min-w-0 flex-1 overflow-hidden whitespace-nowrap text-[16px] text-[#aaa]">
          http://www.<span className="text-[#222]">fwxgx.com</span>
          <span className="text-[14px] tracking-[-0.7px]">/question/giml/list?__ClassCode</span>
        </span>
        <QrCode size={13} strokeWidth={2.4} className="ml-[3px] shrink-0 text-[#4caf50]" />
        <svg width="12" height="15" viewBox="0 0 12 15" className="ml-[4px] shrink-0">
          <path d="M8 0L1 9h4l-2 6 8-9H6z" fill="#35b04a" />
        </svg>
      </span>
      <span className="flex h-full w-[25px] items-center justify-center border-l border-[#d0d0d0]">
        <ChevronDown size={15} strokeWidth={2.5} className="text-[#444]" />
      </span>
      <span className="ml-[4px] flex h-[16px] w-[15px] items-center justify-center bg-[#1a3fc0] text-[9px] text-white">✿</span>
    </div>
    <div className="flex h-[37px] shrink-0 items-center whitespace-nowrap bg-[#f2f2f2] pl-[3px] text-[12px] text-[#222]">
      <span className="flex h-[16px] w-[15px] shrink-0 items-center justify-center bg-[#4a86e8] text-[13px] text-white">8</span>
      <span className="ml-[3px] shrink-0">谷歌</span>
      <span className="ml-[10px] shrink-0">
        <Ball />
      </span>
      <span className="ml-[4px] shrink-0">网址大全</span>
      <svg width="16" height="13" viewBox="0 0 16 13" className="ml-[10px] shrink-0">
        <path d="M0 2l16-2v11L0 13z" fill="#2a6ac8" />
        <path d="M2 9l11-6" stroke="#fff" strokeWidth="2" />
      </svg>
      <span className="ml-[3px] shrink-0">三水区招</span>
      <span className="ml-[10px] shrink-0 text-[#888]">»</span>
      <Grip className="ml-[30px]" />
      <Tool
        className="ml-[12px]"
        icon={
          <G>
            <rect x="1" y="1" width="6" height="6" fill="#f5c060" />
            <rect x="9" y="1" width="6" height="6" fill="#fff" stroke="#e8a040" />
            <rect x="1" y="9" width="6" height="6" fill="#5bb0e0" />
            <rect x="9" y="9" width="6" height="6" fill="#e86060" />
          </G>
        }
        label="扩展"
      />
      <Caret className="ml-[10px] shrink-0 border-t-[#777]" />
      <Tool
        className="ml-[12px]"
        icon={
          <G>
            <path d="M8 1l6 2v5c0 4-3 6-6 7-3-1-6-3-6-7V3z" fill="#e3f6ea" stroke="#2fa860" />
            <path d="M5.500 5L8 8l2.500-3M8 8v4M6 9h4" stroke="#2fa860" />
          </G>
        }
        label="网银"
      />
      <Caret className="ml-[10px] shrink-0 border-t-[#777]" />
      <Tool
        className="ml-[10px]"
        icon={
          <span className="flex h-[15px] w-[17px] items-center justify-center rounded-[2px] border border-[#d86a6a] bg-[#fdeeee] text-[9px] text-[#c84040]">Aa</span>
        }
        label="翻译"
      />
      <Caret className="ml-[10px] shrink-0 border-t-[#777]" />
      <Tool
        className="ml-[13px]"
        icon={
          <G>
            <rect x="1" y="1" width="14" height="14" fill="#fdf5dc" stroke="#e8c060" strokeDasharray="2 1" />
            <circle cx="6" cy="12" r="2" fill="#e09030" />
            <circle cx="11" cy="12" r="2" fill="#e09030" />
          </G>
        }
        label="截图"
      />
      <Caret className="ml-[10px] shrink-0 border-t-[#777]" />
      <span className="ml-[9px] h-[13px] w-[20px] shrink-0 rounded-[3px] border border-[#bbb]" />
    </div>
    <div className="flex h-[27px] shrink-0 items-end gap-[2px] overflow-hidden bg-[#f2f2f2] pl-[2px]">
      <Tab icon={<Ball />} label="360导航_新一代安全上网导航" close />
      <Tab icon={<Person />} label="专业造价问题答疑平台-广联达" close />
      <Tab icon={<Person />} label="专业造价问题答疑平台-广联达服务新干线" active />
    </div>
    <div className="relative flex min-h-0 flex-1 flex-col overflow-hidden pl-[193px] text-[#222]">
      <div className="absolute top-[7px] left-[270px] flex h-[29px] w-[263px] items-center border border-[#c8c8c8] bg-[#f0f0f0] text-[12px] text-[#333]">
        <span className="flex h-full w-[99px] items-center justify-center gap-[6px] border-r border-[#d4d4d4]">
          <svg width="14" height="15" viewBox="0 0 14 15" fill="none" stroke="#3aa85a" strokeWidth="1.3" className="shrink-0">
            <path d="M1 1h12v13H1V11M1 4V1M0 7.500h8M5 4.500l3 3-3 3" />
          </svg>
          发送到手机
        </span>
        {[Cloud, Expand, Save, SquareArrowOutUpRight, Settings].map((Ic, i) => (
          <span key={i} className="flex h-full flex-1 items-center justify-center border-r border-[#d4d4d4] last:border-r-0">
            <Ic size={15} className={i === 0 ? 'text-[#8a9a90]' : 'text-[#3aa85a]'} strokeWidth={i === 1 ? 3 : 1.6} />
          </span>
        ))}
      </div>
      <Question title="求图集3" className="h-[29px] shrink-0" />
      <Question title="工程费用中是否包含甲供材料运输车辆清" coins="50" tag="[市政造价]" className="h-[34px] shrink-0 [&>svg]:ml-[9px]" />
      <Question title="电气中KZ表示什么设备" coins="60" tag="[安装造价]" className="h-[34px] shrink-0 [&>svg]:ml-[5px]" />
      <Question title="我的密码锁灯不亮了？该怎么办？" coins="0" tag="[检测不到]" className="h-[34px] shrink-0 [&>svg]:ml-[8px]" />
      <div className="flex h-[48px] shrink-0 flex-col pt-[9px]">
        <div className="flex h-[16px] items-center whitespace-nowrap pl-[5px]">
          <Ask />
          <span className="text-[14px] text-[#1414b0]">怎么在广联达钢筋算量里绘制对称坡形截面普通独立基础</span>
        </div>
        <span className="mt-[3px] pl-[4px] text-[12px] leading-[16px]">础]</span>
      </div>
      <div className="flex min-h-0 flex-1 flex-col border-l border-t-2 border-[#d8d8d8] pl-[20px]">
        <div className="mt-[9px] flex h-[16px] shrink-0 items-center text-[12px] whitespace-nowrap text-[#999]">
          提问者：<span className="text-[#1a3a6a]">苹果。</span>
          <span className="mx-[13px]">|</span>悬赏分：100分
          <span className="mx-[13px]">|</span>回答次数：1次
        </div>
        <div className="mt-[8px] shrink-0 text-[14px] leading-[20px] whitespace-nowrap text-[#222]">在哪定义，我没找到对应的可参考的模型啊</div>
        <div className="mt-[43px] shrink-0 pl-[10px]">
          <CadDrawing />
        </div>
        <div className="mt-[9px] h-[11px] w-[33px] shrink-0 self-end border-t border-l border-[#d8c8a8]" />
        <div className="flex flex-1 flex-col border-t border-[#b8cce0] bg-[#e4f0fb] pl-[9px]">
          <div className="flex h-[27px] shrink-0 items-center gap-[6px] pt-[5px] text-[12px] text-[#222]">
            <svg width="14" height="12" viewBox="0 0 14 12" className="shrink-0">
              <rect width="14" height="12" fill="#3a9ad8" />
              <rect x="1.500" y="1.500" width="11" height="9" fill="#d8f0fc" />
              <path d="M1.500 10.500l4-4 3 2 4-3v5z" fill="#3a9ad8" />
            </svg>
            插入图片
          </div>
          <div className="flex-1 overflow-hidden border border-[#b8cce0] bg-white pt-[6px] pl-[5px] text-[12px] whitespace-nowrap text-[#c0c0c0]">
            回答即可得2分贡献分，回答被采纳获得系统赠送20贡献分及提
          </div>
        </div>
      </div>
    </div>
  </div>
)

export default function App() {
  return (
    <div className={`relative flex h-[711px] w-[1338px] overflow-hidden bg-white ${FONT}`}>
      <AppWindow />
      <Browser />
      {/* the red annotation arrows lie over both windows */}
      <svg viewBox="0 0 1338 711" className="pointer-events-none absolute inset-0 h-[711px] w-[1338px]">
        <g stroke="#f01010" strokeWidth="3.5" fill="none">
          <path d="M301 101L506 382" />
          <path d="M301 101L1108 513" />
        </g>
        <path d="M510 389l-14-10 9-7zM299 99l18 3-8 8z" fill="#f01010" />
      </svg>
    </div>
  )
}
